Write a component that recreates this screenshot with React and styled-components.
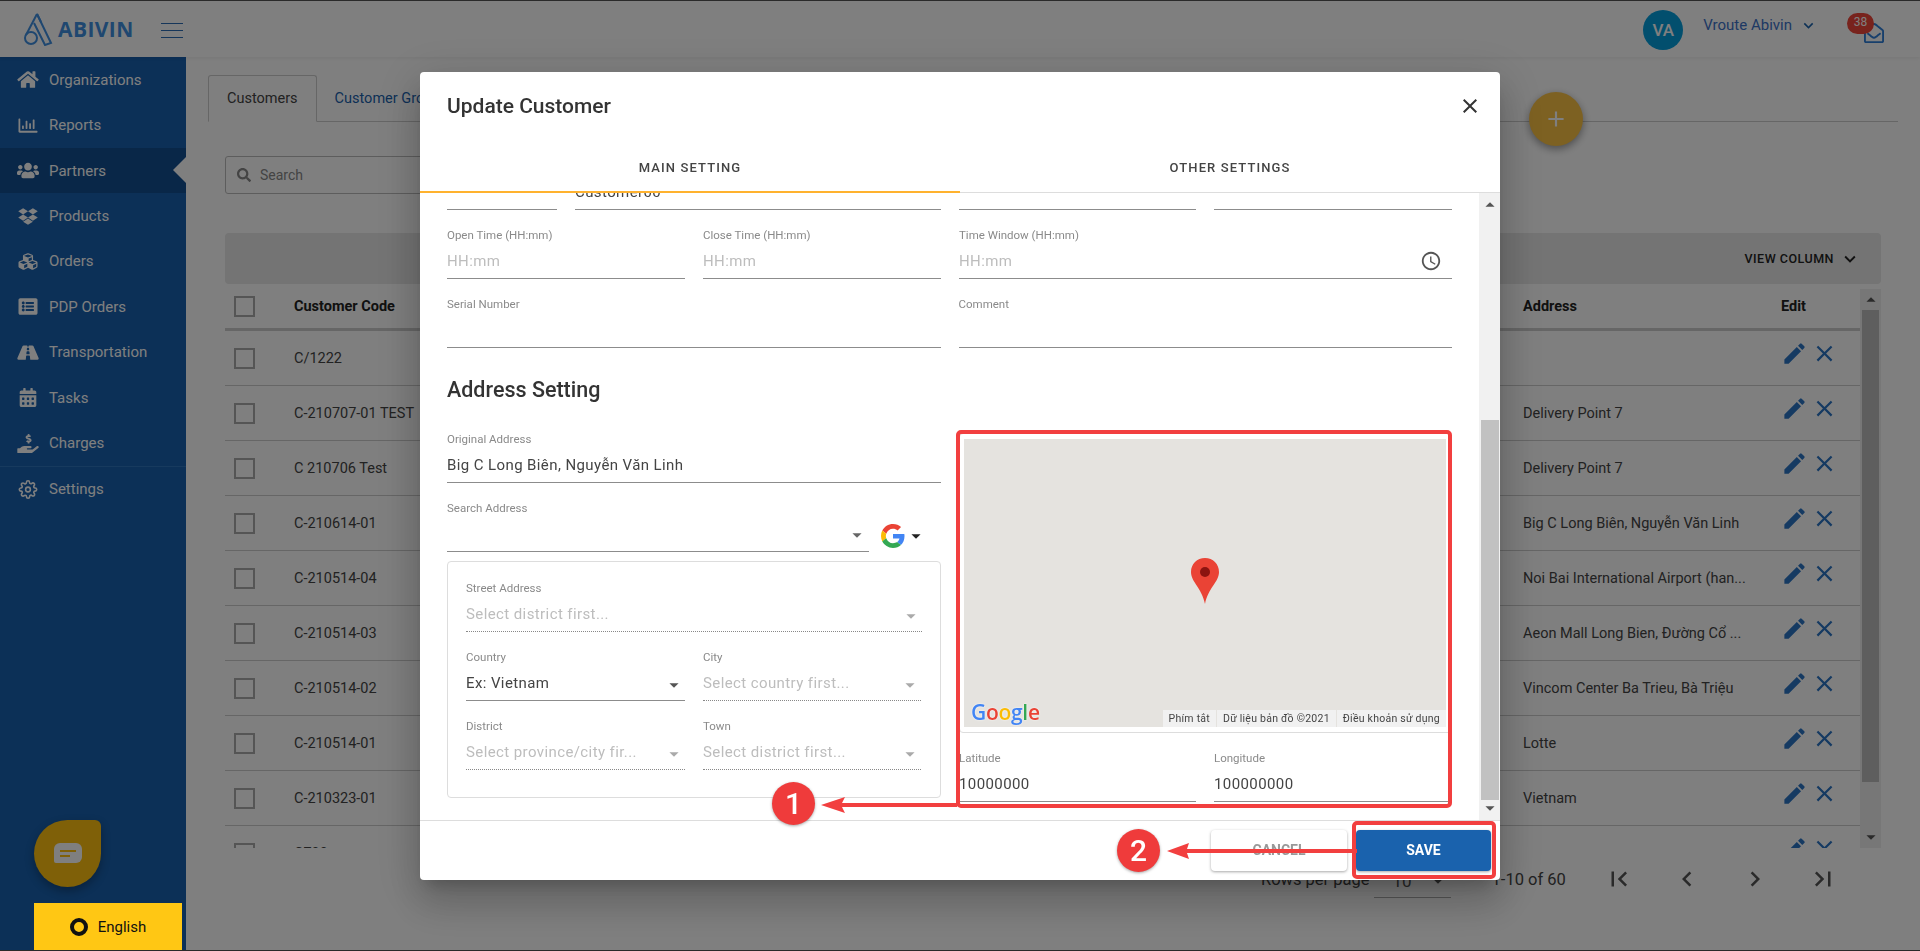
import React from 'react';
import styled, { createGlobalStyle } from 'styled-components';
import { FaHome, FaRegChartBar, FaUsers, FaDropbox, FaCubes, FaListAlt, FaRoad, FaCalendarAlt, FaHandHoldingUsd, FaRegEnvelopeOpen, FaSearch } from 'react-icons/fa';
import { FiSettings } from 'react-icons/fi';
import { MdEdit, MdClose, MdKeyboardArrowDown, MdFirstPage, MdLastPage, MdChevronLeft, MdChevronRight, MdAccessTime, MdArrowDropDown, MdArrowDropUp, MdAdd } from 'react-icons/md';

const Global = createGlobalStyle`
  html, body { margin: 0; padding: 0; height: 100%; overflow: hidden; background: #fff; }
  body { font-family: Roboto, "Liberation Sans", sans-serif; }
  * { box-sizing: border-box; }
`;

const Page = styled.div`
  height: 951px; display: flex; flex-direction: column; overflow: hidden;
  border-top: 1px solid #555; border-bottom: 1px solid #555; background: #fff;
`;
const Header = styled.header`
  height: 56px; flex: none; display: flex; align-items: center; background: #fff; padding-left: 23px;
  box-shadow: 0 1px 4px rgba(0,0,0,.08); position: relative;
`;
const LogoText = styled.span`
  font-family: "Open Sans", sans-serif; font-weight: 700; font-size: 21px; color: #3e8fe0; margin-left: 5px; letter-spacing: .4px;
`;
const Burger = styled.div`
  width: 22px; height: 15px; margin: 3px 0 0 27px; border-top: 1px solid #2d6db5; border-bottom: 1px solid #2d6db5; position: relative;
  &::after { content: ''; position: absolute; left: 0; right: 0; top: 6px; height: 1px; background: #2d6db5; }
`;
const HeaderRight = styled.div`
  margin-left: auto; display: flex; align-items: center; padding-right: 36px;
`;
const Avatar = styled.div`
  width: 40px; height: 40px; border-radius: 50%; background: #049edc; color: #fff; font-weight: 500; font-size: 17px;
  display: flex; align-items: center; justify-content: center; margin-top: 1px;
`;
const UserName = styled.span`
  font-size: 15px; color: #3d72c8; margin-left: 20px; margin-top: -8px;
`;
const UserCaret = styled(MdKeyboardArrowDown)`
  font-size: 19px; color: #1a62ad; margin: -8px 0 0 7px;
`;
const Mail = styled.div`
  position: relative; width: 20px; height: 20px; margin: 8px 0 0 46px; color: #2f7fd8; font-size: 20px; line-height: 0;
`;
const MailBadge = styled.span`
  position: absolute; left: -17px; top: -10px; width: 27px; height: 21px; border-radius: 11px; background: #f0463a; color: #fff;
  font-size: 12px; line-height: 19px; text-align: center;
`;
const Body = styled.div`flex: 1; display: flex; min-height: 0;`;
const Sidebar = styled.nav`
  width: 186px; flex: none; background: #1860ae; display: flex; flex-direction: column;
`;
const NavItem = styled.div`
  height: 45.45px; flex: none; display: flex; align-items: center; padding-left: 17px; color: #fff; font-size: 15px; position: relative;
  background: ${p => p.$active ? '#134f90' : 'transparent'};
  border-top: ${p => p.$sep ? '1px solid #2f74bd' : 'none'};
  svg { width: 22px; height: 19px; margin-right: 10px; flex: none; }
  ${p => p.$active ? `&::after { content: ''; position: absolute; right: 0; top: 9px; border: 13px solid transparent; border-left: 0; border-right-color: #fff; }` : ''}
`;
const ChatBlob = styled.div`
  position: absolute; left: 34px; top: 820px; width: 67px; height: 67px; border-radius: 50% 6px 50% 50%; background: #ffc010;
  box-shadow: 0 4px 10px rgba(0,0,0,.3); display: flex; align-items: center; justify-content: center;
`;
const LangButton = styled.div`
  position: absolute; z-index: 20; left: 34px; top: 903px; width: 148px; height: 47px; background: #ffc714; color: #111;
  display: flex; align-items: center; justify-content: center; gap: 10px; font-size: 15px;
`;
const LangRing = styled.span`width: 18px; height: 18px; border-radius: 50%; border: 4px solid #111;`;

const Main = styled.main`flex: 1; min-width: 0; padding: 18px 22px 0; display: flex; flex-direction: column; position: relative;`;
const TabBar = styled.div`display: flex; border-bottom: 1px solid #ccc; height: 47px; flex: none;`;
const PageTab = styled.div`
  height: 47px; padding: 0 18px; display: flex; align-items: center; font-size: 14.5px;
  color: ${p => p.$active ? '#444' : '#1a62ad'};
  ${p => p.$active ? 'border: 1px solid #ccc; border-bottom: 1px solid #fff; border-radius: 3px 3px 0 0;' : ''}
`;
const Fab = styled.div`
  position: absolute; left: 1343px; top: 35px; width: 54px; height: 54px; border-radius: 50%; background: #fbc244; color: #fff;
  display: flex; align-items: center; justify-content: center; font-size: 26px; box-shadow: 0 3px 8px rgba(0,0,0,.4);
`;
const Inner = styled.div`padding: 34px 17px 0; flex: 1; display: flex; flex-direction: column; min-height: 0;`;
const SearchBox = styled.div`
  width: 500px; height: 38px; border: 1px solid #bbb; border-radius: 3px; display: flex; align-items: center; padding-left: 11px; gap: 9px; color: #888; font-size: 14px; flex: none;
`;
const Toolbar = styled.div`
  height: 51px; flex: none; margin-top: 39px; background: #e8e8e8; border-radius: 4px; display: flex; justify-content: flex-end; align-items: center;
  padding-right: 20px; font-size: 12.5px; font-weight: 500; letter-spacing: .5px; color: #222; gap: 5px;
`;
const TableWrap = styled.div`height: 564px; flex: none; display: flex; overflow: hidden;`;
const Table = styled.div`flex: 1; min-width: 0;`;
const Row = styled.div`
  display: grid; grid-template-columns: 69px 1fr 258px 79px; align-items: center; font-size: 14.5px; color: #444;
  height: ${p => p.$head ? '47px' : '55px'}; border-bottom: ${p => p.$head ? '3px solid #ccc' : '1px solid #ccc'};
  ${p => p.$head ? 'font-weight: 700; color: #222;' : ''}
`;
const Check = styled.span`display: block; width: 21px; height: 21px; border: 2px solid #aaa; margin-left: 9px;`;
const Actions = styled.div`display: flex; align-items: center; gap: 3px; margin-top: -10px; color: #2b74c4; font-size: 27px; line-height: 0;`;
const Track = styled.div`width: 21px; margin-top: 5px; background: #eee; display: flex; flex-direction: column; align-items: center; color: #555; line-height: 0; font-size: 22px; justify-content: space-between; position: relative;`;
const Thumb = styled.div`position: absolute; left: 2px; right: 2px; top: 21px; height: 472px; background: #bdbdbd;`;
const Pager = styled.div`
  flex: none; display: flex; align-items: center; height: 62px; color: #444; font-size: 16.5px; padding-left: 1036px; margin-top: 0;
`;
const PageSize = styled.div`
  width: 77px; height: 33px; margin: 4px 0 0 4px; border-bottom: 1px solid #aaa; display: flex; align-items: center; justify-content: space-between; padding: 0 2px 0 19px; font-size: 17px; color: #555; 
`;
const PageCount = styled.span`margin-left: 41px; width: 100px;`;
const PagerIcons = styled.div`display: flex; gap: 38px; font-size: 30px; color: #555; line-height: 0; margin-left: 12px;`;

const Overlay = styled.div`position: fixed; inset: 0; z-index: 10; background: rgba(0,0,0,.5); display: flex; align-items: center; justify-content: center;`;
const Modal = styled.div`
  width: 1080px; height: 808px; background: #fff; border-radius: 4px; position: relative; display: flex; flex-direction: column;
  box-shadow: 0 11px 15px -7px rgba(0,0,0,.2), 0 24px 38px 3px rgba(0,0,0,.14), 0 9px 46px 8px rgba(0,0,0,.12);
`;
const TitleRow = styled.div`height: 68px; flex: none; padding: 0 18px 0 27px; display: flex; align-items: center; justify-content: space-between; font-size: 21px; font-weight: 500; color: #333; margin-bottom: 4px;`;
const CloseBtn = styled(MdClose)`font-size: 24px; color: #333;`;
const ModalTabs = styled.div`display: grid; grid-template-columns: 540px 540px; height: 49px; flex: none;`;
const ModalTab = styled.div`
  display: flex; align-items: center; justify-content: center; font-size: 13px; font-weight: 500; letter-spacing: 1.1px; color: #444;
  padding-top: ${p => p.$active ? '0' : '0'};
  border-bottom: ${p => p.$active ? '2px solid #ffb22e' : '1px solid #ddd'};
`;
const ScrollBody = styled.div`flex: 1; min-height: 0; display: flex; overflow: hidden;`;
const Content = styled.div`flex: 1; min-width: 0; padding: 0 27px; margin-top: -35px;`;
const FormRow = styled.div`display: grid; grid-template-columns: ${p => p.$cols}; column-gap: 18px; margin-bottom: ${p => p.$mb ?? 17}px;`;
const Field = styled.div`
  height: 52px; display: flex; flex-direction: column; position: relative; min-width: 0;
  border-bottom: 1px ${p => p.$dotted ? 'dotted' : 'solid'} ${p => p.$dotted ? '#888' : '#8c8c8c'};
`;
const Label = styled.div`font-size: 11.5px; line-height: 16px; color: #8a8a8a;`;
const Value = styled.div`
  font-size: 15px; line-height: 20px; margin-top: 8px; letter-spacing: .4px; white-space: nowrap; overflow: hidden;
  color: ${p => p.$ph ? '#bdbdbd' : '#444'}; padding-right: ${p => p.$pr ?? 0}px;
`;
const FieldIcon = styled.span`
  position: absolute; right: ${p => p.$right ?? 0}px; bottom: ${p => p.$bottom ?? 8}px; font-size: ${p => p.$size ?? 22}px; line-height: 0;
  color: ${p => p.$color ?? '#999'};
`;
const Heading = styled.h2`margin: 28px 0 27px; font-size: 21.5px; line-height: 28px; font-weight: 500; color: #333;`;
const AddrGrid = styled.div`display: grid; grid-template-columns: 494px 493px; column-gap: 18px;`;
const SearchRow = styled.div`display: flex; align-items: flex-end; margin: 17px 0 9px;`;
const SearchField = styled(Field)`width: 422px;`;
const GoogleWrap = styled.div`display: flex; align-items: center; margin: 0 0 4px 12px; font-size: 20px; line-height: 0; color: #222;`;
const AddrBox = styled.div`border: 1px solid #ddd; border-radius: 4px; padding: 18px 18px 10px;`;
const BoxRow = styled.div`display: grid; grid-template-columns: 219px 218px; column-gap: 18px; margin-bottom: 17px;`;
const MapCard = styled.div`margin-top: 2px; height: 300px; border: 1px solid #ddd; border-radius: 4px; padding: 5px 5px 5px 4px;`;
const MapArea = styled.div`height: 288px; background: #e5e3df; position: relative; display: flex; align-items: center; justify-content: center;`;
const Pin = styled.svg`width: 28px; height: 46px; margin-bottom: 3px;`;
const GoogleMark = styled.div`position: absolute; left: 7px; bottom: 2px; font-family: "Open Sans", sans-serif; font-size: 21px; font-weight: 600; letter-spacing: -.3px; line-height: 26px; text-shadow: 0 0 2px #fff;`;
const Letter = styled.span`color: ${p => p.$c};`;
const Attribution = styled.div`position: absolute; right: 0; bottom: 0; height: 17px; display: flex; font-size: 10.5px; letter-spacing: .25px; color: #444;`;
const AttrItem = styled.span`background: #f1f1f1; padding: 0 6px; line-height: 17px; margin-left: 1px;`;
const LatLng = styled.div`display: grid; grid-template-columns: 237px 1fr; column-gap: 18px; margin-top: 17px;`;
const ModalScroll = styled.div`width: 21px; flex: none; background: #f1f1f1; position: relative; display: flex; flex-direction: column; justify-content: space-between; align-items: center; color: #555; font-size: 22px; line-height: 0; padding: 1px 0;`;
const ModalThumb = styled.div`position: absolute; left: 2px; right: 1px; top: 227px; height: 380px; background: #c1c1c1;`;
const Footer = styled.div`height: 60px; flex: none; border-top: 1px solid #ddd; display: flex; justify-content: flex-end; padding: 9px 9px 0; gap: 9px;`;
const Btn = styled.div`
  height: 41px; width: ${p => p.$primary ? 135 : 136}px; border-radius: 4px; display: flex; align-items: center; justify-content: center; font-size: 14px; font-weight: 700;
  background: ${p => p.$primary ? '#1a62ad' : '#fff'}; color: ${p => p.$primary ? '#fff' : '#999'};
  box-shadow: 0 1px 3px rgba(0,0,0,.35);
`;
const RedFrame = styled.div`
  position: absolute; left: ${p => p.$l}px; top: ${p => p.$t}px; width: ${p => p.$w}px; height: ${p => p.$h}px;
  border: 4px solid #f23f3f; border-radius: 5px; pointer-events: none;
`;
const Callout = styled.div`
  position: absolute; left: ${p => p.$l}px; top: ${p => p.$t}px; width: 43px; height: 43px; border-radius: 50%; background: #ef3b3b;
  color: #fff; font-size: 30px; font-weight: 500; display: flex; align-items: center; justify-content: center; box-shadow: 0 1px 3px rgba(0,0,0,.35);
`;
const ArrowSvg = styled.svg`position: absolute; left: ${p => p.$l}px; top: ${p => p.$t}px; overflow: visible;`;

const nav = [
  [FaHome, 'Organizations'], [FaRegChartBar, 'Reports'], [FaUsers, 'Partners', true], [FaDropbox, 'Products'], [FaCubes, 'Orders'],
  [FaListAlt, 'PDP Orders'], [FaRoad, 'Transportation'], [FaCalendarAlt, 'Tasks'], [FaHandHoldingUsd, 'Charges'],
];
const rows = [
  ['C/1222', ''], ['C-210707-01 TEST', 'Delivery Point 7'], ['C 210706 Test', 'Delivery Point 7'],
  ['C-210614-01', 'Big C Long Biên, Nguyễn Văn Linh'], ['C-210514-04', 'Noi Bai International Airport (han...'],
  ['C-210514-03', 'Aeon Mall Long Bien, Đường Cổ ...'], ['C-210514-02', 'Vincom Center Ba Trieu, Bà Triệu'],
  ['C-210514-01', 'Lotte'], ['C-210323-01', 'Vietnam'], ['C700', ''],
];

const Logo = () => (
  <svg width="30" height="34" viewBox="0 0 30 34" fill="none" stroke="#3e8fe0" strokeWidth="2">
    <path d="M14 2 L3 23" /><circle cx="8" cy="26" r="6" /><path d="M14 2 L28 31 L22 33 L11 11" /><path d="M14 2 L18 10" />
  </svg>
);
const GoogleG = () => (
  <svg width="24" height="24" viewBox="0 0 48 48">
    <path fill="#EA4335" d="M24 9.5c3.5 0 6.700 1.200 9.200 3.600l6.900-6.900C35.900 2.400 30.500 0 24 0 14.600 0 6.500 5.400 2.600 13.200l8 6.200C12.400 13.700 17.700 9.500 24 9.500z" />
    <path fill="#4285F4" d="M47 24.500c0-1.600-.1-3.100-.4-4.500H24v9h12.900c-.6 3-2.200 5.500-4.700 7.200l7.700 6C44.400 37.900 47 31.800 47 24.500z" />
    <path fill="#FBBC05" d="M10.500 28.600c-.5-1.400-.8-3-.8-4.600s.3-3.200.8-4.600l-8-6.200C.9 16.500 0 20.100 0 24s.9 7.500 2.600 10.800l7.900-6.200z" />
    <path fill="#34A853" d="M24 48c6.500 0 11.900-2.100 15.900-5.800l-7.700-6c-2.200 1.400-4.900 2.300-8.200 2.300-6.300 0-11.600-4.200-13.500-10l-8 6.200C6.500 42.600 14.600 48 24 48z" />
  </svg>
);
const F = ({ label, value, ph, dotted, caret, dark, pr }) => (
  <Field $dotted={dotted}>
    <Label>{label}</Label>
    <Value $ph={ph} $pr={pr}>{value || '\u00a0'}</Value>
    {caret && <FieldIcon $right={0} $bottom={4} $color={dark ? '#555' : '#aaa'}><MdArrowDropDown /></FieldIcon>}
  </Field>
);

export default function App() {
  return (
    <>
      <Global />
      <Page>
        <Header>
          <Logo />
          <LogoText>ABIVIN</LogoText>
          <Burger />
          <HeaderRight>
            <Avatar>VA</Avatar>
            <UserName>Vroute Abivin</UserName>
            <UserCaret />
            <Mail><MailBadge>38</MailBadge><FaRegEnvelopeOpen /></Mail>
          </HeaderRight>
        </Header>
        <Body>
          <Sidebar>
            {nav.map(([I, t, a]) => <NavItem key={t} $active={a}><I />{t}</NavItem>)}
            <NavItem $sep><FiSettings />Settings</NavItem>
            <ChatBlob>
              <svg width="28" height="21" viewBox="0 0 28 21"><path d="M6 0h16a6 6 0 0 1 6 6v8a6 6 0 0 1-6 6H2a2 2 0 0 1-2-2V6a6 6 0 0 1 6-6z" fill="#fff" /><path d="M6 8h16M6 13h10" stroke="#ffc010" strokeWidth="2" /></svg>
            </ChatBlob>
            <LangButton><LangRing />English</LangButton>
          </Sidebar>
          <Main>
            <TabBar>
              <PageTab $active>Customers</PageTab>
              <PageTab>Customer Groups</PageTab>
            </TabBar>
            <Fab><MdAdd /></Fab>
            <Inner>
              <SearchBox><FaSearch />Search</SearchBox>
              <Toolbar>VIEW COLUMN <MdKeyboardArrowDown size={22} /></Toolbar>
              <TableWrap>
                <Table>
                  <Row $head><Check /><span>Customer Code</span><span>Address</span><span>Edit</span></Row>
                  {rows.map(([c, a]) => (
                    <Row key={c}><Check /><span>{c}</span><span>{a}</span><Actions><MdEdit /><MdClose /></Actions></Row>
                  ))}
                </Table>
                <Track><MdArrowDropUp /><Thumb /><MdArrowDropDown /></Track>
              </TableWrap>
              <Pager>
                Rows per page
                <PageSize>10<MdArrowDropDown size={22} /></PageSize>
                <PageCount>1-10 of 60</PageCount>
                <PagerIcons><MdFirstPage /><MdChevronLeft /><MdChevronRight /><MdLastPage /></PagerIcons>
              </Pager>
            </Inner>
          </Main>
        </Body>
      </Page>
      <Overlay>
        <Modal>
          <TitleRow>Update Customer<CloseBtn /></TitleRow>
          <ModalTabs><ModalTab $active>MAIN SETTING</ModalTab><ModalTab>OTHER SETTINGS</ModalTab></ModalTabs>
          <ScrollBody>
            <Content>
              <FormRow $cols="110px 366px 237px 238px">
                <F label="Code" value="" /><F label="Name" value="Customer00" /><F label="Phone" value="" /><F label="Email" value="" />
              </FormRow>
              <FormRow $cols="238px 238px 1fr">
                <F label="Open Time (HH:mm)" value="HH:mm" ph /><F label="Close Time (HH:mm)" value="HH:mm" ph />
                <Field>
                  <Label>Time Window (HH:mm)</Label>
                  <Value $ph>HH:mm</Value>
                  <FieldIcon $right={10} $bottom={6} $color="#555"><MdAccessTime /></FieldIcon>
                </Field>
              </FormRow>
              <FormRow $cols="1fr 1fr" $mb={0}>
                <F label="Serial Number" /><F label="Comment" />
              </FormRow>
              <Heading>Address Setting</Heading>
              <AddrGrid>
                <div>
                  <F label="Original Address" value="Big C Long Biên, Nguyễn Văn Linh" />
                  <SearchRow>
                    <SearchField>
                      <Label>Search Address</Label>
                      <FieldIcon $right={1} $bottom={5} $color="#666"><MdArrowDropDown /></FieldIcon>
                    </SearchField>
                    <GoogleWrap><GoogleG /><MdArrowDropDown size={22} /></GoogleWrap>
                  </SearchRow>
                  <AddrBox>
                    <FormRow $cols="1fr"><F label="Street Address" value="Select district first..." ph dotted caret /></FormRow>
                    <BoxRow>
                      <F label="Country" value="Ex: Vietnam" caret dark ph={false} />
                      <F label="City" value="Select country first..." ph dotted caret />
                    </BoxRow>
                    <BoxRow>
                      <F label="District" value="Select province/city fir..." ph dotted caret />
                      <F label="Town" value="Select district first..." ph dotted caret />
                    </BoxRow>
                  </AddrBox>
                </div>
                <div>
                  <MapCard>
                    <MapArea>
                      <Pin viewBox="0 0 28 46"><path d="M14 0C6 0 0 6 0 14c0 10 11 16 14 32 3-16 14-22 14-32C28 6 22 0 14 0z" fill="#ea4335" /><circle cx="14" cy="14" r="5" fill="#8c1410" /></Pin>
                      <GoogleMark><Letter $c="#4285f4">G</Letter><Letter $c="#ea4335">o</Letter><Letter $c="#fbbc05">o</Letter><Letter $c="#4285f4">g</Letter><Letter $c="#34a853">l</Letter><Letter $c="#ea4335">e</Letter></GoogleMark>
                      <Attribution>
                        <AttrItem>Phím tắt</AttrItem><AttrItem>Dữ liệu bản đồ ©2021</AttrItem><AttrItem>Điều khoản sử dụng</AttrItem>
                      </Attribution>
                    </MapArea>
                  </MapCard>
                  <LatLng>
                    <F label="Latitude" value="10000000" /><F label="Longitude" value="100000000" />
                  </LatLng>
                </div>
              </AddrGrid>
            </Content>
            <ModalScroll><MdArrowDropUp /><ModalThumb /><MdArrowDropDown /></ModalScroll>
          </ScrollBody>
          <Footer><Btn>CANCEL</Btn><Btn $primary>SAVE</Btn></Footer>
          <RedFrame $l={536} $t={358} $w={496} $h={378} />
          <RedFrame $l={932} $t={749} $w={144} $h={58} />
          <ArrowSvg $l={401} $t={725} width="136" height="16"><path d="M0 8 L24 0 L21 6 H136 V10 H21 L24 16 Z" fill="#f23f3f" /></ArrowSvg>
          <ArrowSvg $l={747} $t={771} width="190" height="16"><path d="M0 8 L22 0 L20 6 H190 V10 H20 L22 16 Z" fill="#f23f3f" /></ArrowSvg>
          <Callout $l={352} $t={710}>1</Callout>
          <Callout $l={697} $t={757}>2</Callout>
        </Modal>
      </Overlay>
    </>
  );
}
